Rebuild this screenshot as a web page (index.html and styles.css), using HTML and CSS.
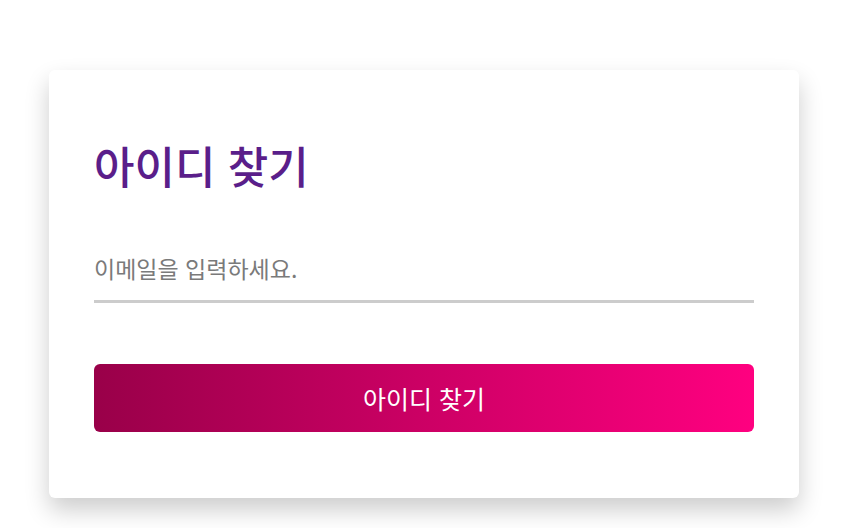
FILE: index.html
```html
<!DOCTYPE html>
<html lang="ko">

<head>
  <meta name="viewport" content="width=device-width, initial-scale=1.0" />
  <title>아이디 찾기</title>

  <link rel="stylesheet" href="styles.css">

</head>

<body>

  <div class="page">
    <div class="card">

      <h1 class="title">아이디 찾기</h1>

      <div class="field">
        <input type="email" id="email" placeholder="이메일을 입력하세요." />
      </div>

      <button id="find-btn">아이디 찾기</button>

    </div>
  </div>

</body>

</html>
```

FILE: styles.css
```css
* {
  padding: 0;
  margin: 0;
  box-sizing: border-box;
  font-family: 'Noto Sans CJK KR', 'Noto Sans', sans-serif;
}

body {
  background-color: #ffffff;
}

.page {
  padding: 70px 0 40px 49px;
}

.card {
  width: 750px;
  background-color: #ffffff;
  padding: 45px 45px 66px 45px;
  border-radius: 6px;
  box-shadow: 0 12px 24px rgba(0, 0, 0, 0.2);
}

.title {
  color: #5a1e8a;
  font-size: 44px;
  font-weight: 500;
  line-height: 60px;
  margin-top: 20px;
}

.field {
  margin-top: 51px;
}

input {
  width: 100%;
  border: none;
  border-bottom: 3px solid #cccccc;
  font-size: 23px;
  color: #333333;
  padding: 6px 0 16px 0;
  line-height: 32px;
}

input::placeholder {
  color: #7a7a7a;
}

input:focus {
  outline: none;
}

button {
  display: block;
  width: 100%;
  height: 68px;
  margin-top: 61px;
  border: none;
  border-radius: 6px;
  background: linear-gradient(to right, #990049, #ff0080);
  color: #ffffff;
  font-size: 25px;
}
```
